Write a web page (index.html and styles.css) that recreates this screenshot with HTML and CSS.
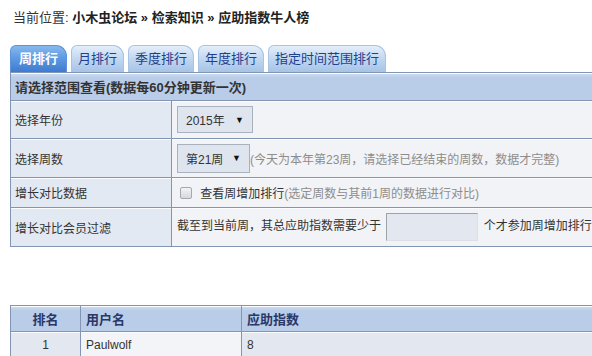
FILE: index.html
```html
<!DOCTYPE html>
<html lang="zh-CN">
  <head>
    <meta charset="UTF-8" />
    <meta name="viewport" content="width=device-width, initial-scale=1.0" />
    <title>应助指数牛人榜</title>
    <link rel="stylesheet" href="styles.css">
  </head>
  <body>
    <div class="page">
      <div class="crumb">
        当前位置: <b>小木虫论坛 &raquo; 检索知识 &raquo; 应助指数牛人榜</b>
      </div>

      <ul class="tabs">
        <li class="tab active">周排行</li>
        <li class="tab">月排行</li>
        <li class="tab">季度排行</li>
        <li class="tab">年度排行</li>
        <li class="tab">指定时间范围排行</li>
      </ul>

      <table class="panel">
        <tr class="head">
          <th colspan="2">请选择范围查看(数据每60分钟更新一次)</th>
        </tr>
        <tr class="row-year">
          <td class="label">选择年份</td>
          <td class="value">
            <span class="select sel-year">2015年 <i class="arrow">&#9660;</i></span>
          </td>
        </tr>
        <tr class="row-week">
          <td class="label">选择周数</td>
          <td class="value">
            <span class="select sel-week">第21周 <i class="arrow">&#9660;</i></span><span class="hint">(今天为本年第23周，请选择已经结束的周数，数据才完整)</span>
          </td>
        </tr>
        <tr class="row-check">
          <td class="label">增长对比数据</td>
          <td class="value">
            <span class="check"></span>
            <span class="check-text">查看周增加排行</span><span class="hint">(选定周数与其前1周的数据进行对比)</span>
          </td>
        </tr>
        <tr class="row-filter">
          <td class="label">增长对比会员过滤</td>
          <td class="value">
            截至到当前周，其总应助指数需要少于 <span class="field"></span> 个才参加周增加排行
          </td>
        </tr>
      </table>

      <table class="rank">
        <tr class="head">
          <th class="col-no">排名</th>
          <th class="col-user">用户名</th>
          <th class="col-score">应助指数</th>
        </tr>
        <tr>
          <td class="col-no">1</td>
          <td class="col-user user">Paulwolf</td>
          <td class="col-score">8</td>
        </tr>
      </table>
    </div>
  </body>
</html>
```

FILE: styles.css
```css
* {
  padding: 0;
  margin: 0;
  box-sizing: border-box;
}

html,
body {
  overflow: hidden;
}

body {
  background: #fff;
  color: #333;
  font-family: "Liberation Sans", "Noto Sans CJK SC", sans-serif;
  font-size: 12px;
}

.page {
  width: 960px;
  padding-left: 10px;
}

.crumb {
  padding: 10px 0 0 3px;
  font-size: 13px;
  line-height: 16px;
  color: #333;
}

.crumb b {
  color: #222;
}

.tabs {
  list-style: none;
  display: flex;
  gap: 4px;
  margin-top: 19px;
  height: 27px;
}

.tab {
  padding: 0 6px;
  font-size: 13px;
  line-height: 26px;
  color: #1f3f8f;
  border: 1px solid #a9c3e2;
  border-bottom: none;
  border-radius: 6px 11px 0 0;
  background: linear-gradient(#e4eefa 0%, #c4d9f1 45%, #a6c3e6 100%);
}

.tab.active {
  padding: 0 8px;
  color: #fff;
  font-weight: bold;
  border-color: #5b93dc;
  background: linear-gradient(#86b9ee 0%, #5c97e0 50%, #3e7bd0 100%);
}

.panel,
.rank {
  width: 950px;
  border-collapse: collapse;
}

.panel th,
.panel td,
.rank th,
.rank td {
  border: 1px solid #8296b3;
  box-shadow: inset 0 1px 0 #fafcff;
  vertical-align: middle;
}

.panel .head th {
  height: 28px;
  padding-left: 4px;
  text-align: left;
  font-size: 13px;
  color: #333;
  background: linear-gradient(#cddcf0 0, #b9cde9 4px, #b9cde9 100%);
}

.panel .label {
  width: 161px;
  padding-left: 4px;
  background: #e3e9f2;
}

.panel .value {
  padding-left: 5px;
  background: #f2f3f7;
}

.row-year td {
  height: 38px;
}

.row-week td {
  height: 39px;
}

.row-check td {
  height: 30px;
}

.row-filter td {
  height: 39px;
}

.select {
  display: inline-flex;
  align-items: center;
  justify-content: space-between;
  padding: 0 8px;
  color: #333;
  background: #dfe5ee;
  border: 1px solid #a9b1bd;
  vertical-align: middle;
}

.sel-year {
  width: 76px;
  height: 27px;
}

.sel-week {
  width: 73px;
  height: 29px;
}

.arrow {
  font-style: normal;
  font-size: 9px;
  color: #111;
}

.hint {
  color: #8d8d8d;
  vertical-align: middle;
}

.check {
  display: inline-block;
  width: 12px;
  height: 12px;
  margin: 0 5px 0 3px;
  border: 1px solid #a4a9b1;
  border-radius: 2px;
  background: linear-gradient(#f3f3f3, #d6d8dc);
  vertical-align: middle;
}

.check-text {
  color: #333;
  vertical-align: middle;
}

.field {
  display: inline-block;
  width: 92px;
  height: 28px;
  margin: 0 2px;
  background: #e3e8f0;
  border: 1px solid #dbe0e7;
  border-top-color: #9da3ab;
  border-left-color: #9da3ab;
  vertical-align: middle;
}

.rank {
  margin-top: 58px;
}

.rank .head th {
  height: 26px;
  font-size: 13px;
  color: #2a3868;
  text-align: left;
  padding-left: 5px;
  background: linear-gradient(#cddcf0 0, #b9cde9 4px, #b9cde9 100%);
}

.rank td {
  height: 26px;
  padding-left: 5px;
  background: #e3e8f0;
}

.rank .col-no,
.rank .head .col-no {
  width: 70px;
  text-align: center;
  padding-left: 0;
}

.rank .col-user {
  width: 161px;
}

.rank td.user {
  background: #f3f4f7;
  border-bottom-color: #c9d36f;
}
```
